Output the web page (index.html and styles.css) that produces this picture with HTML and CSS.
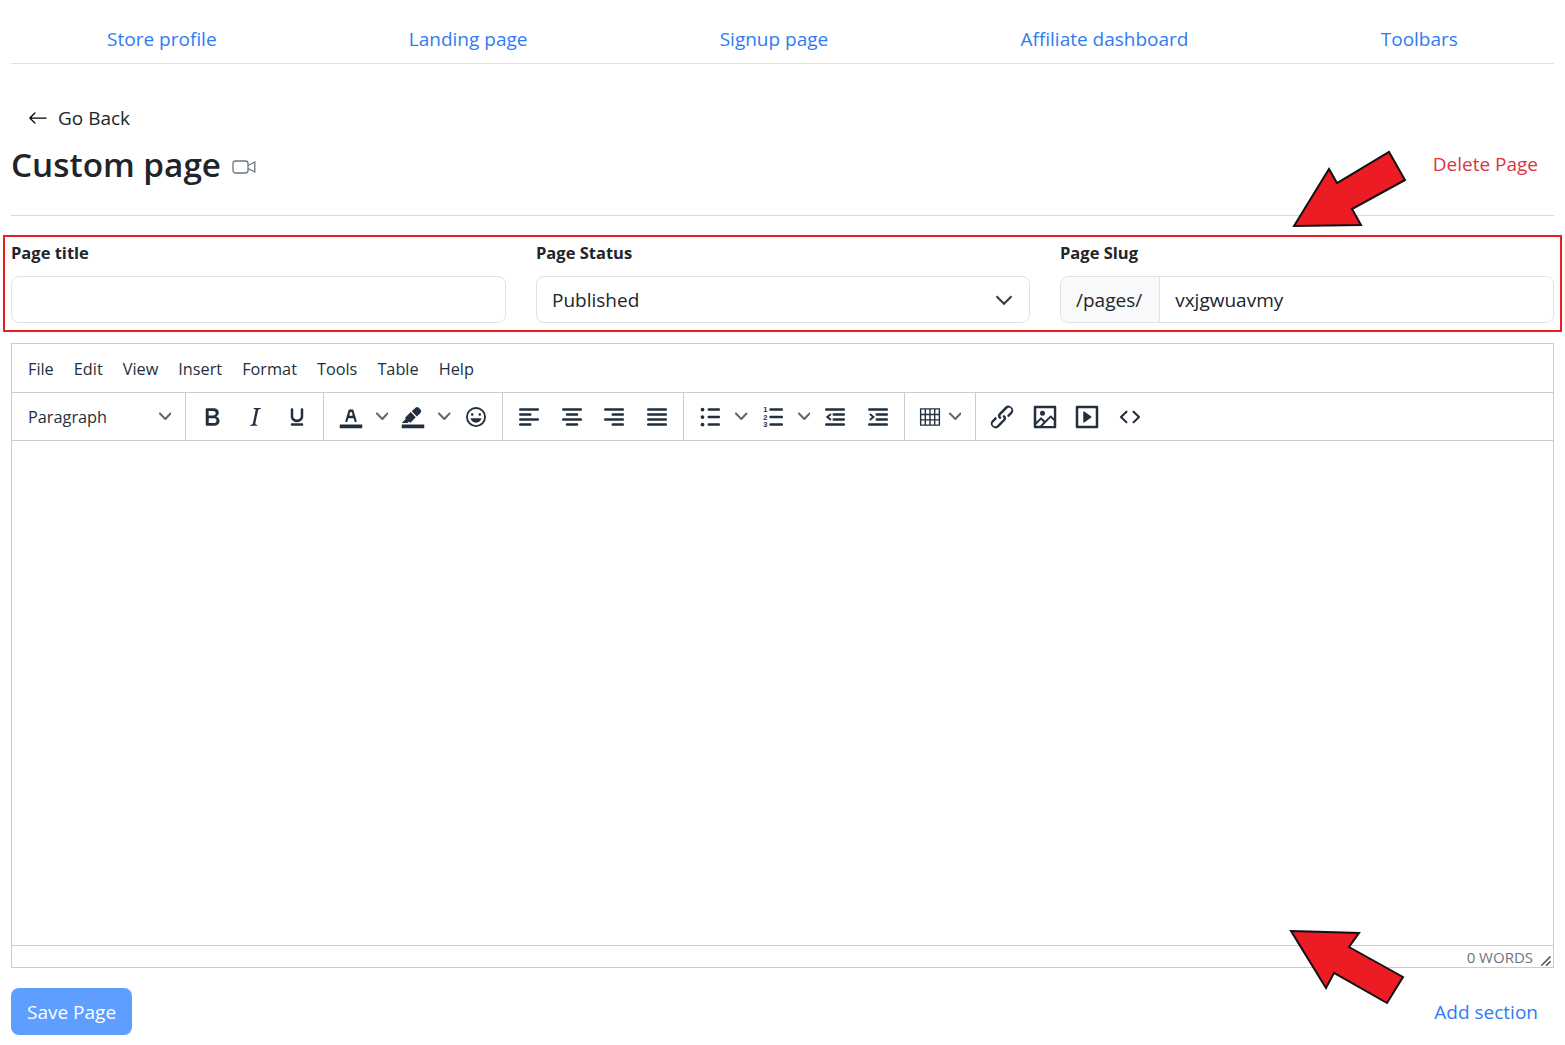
FILE: index.html
```html
<!DOCTYPE html>
<html lang="en">
<head>
    <meta charset="UTF-8">
    <meta name="viewport" content="width=device-width, initial-scale=1.0">
    <title>Custom page</title>
    <link rel="stylesheet" href="styles.css">
</head>
<body>
    <div class="page">
        <nav class="tabs">
            <a href="#">Store profile</a>
            <a href="#">Landing page</a>
            <a href="#">Signup page</a>
            <a href="#">Affiliate dashboard</a>
            <a href="#">Toolbars</a>
        </nav>

        <a class="go-back" href="#">
            <svg width="20" height="20" viewBox="0 0 16 16"><path d="M15 8a.5.5 0 0 0-.5-.5H2.707l3.147-3.146a.5.5 0 1 0-.708-.708l-4 4a.5.5 0 0 0 0 .708l4 4a.5.5 0 0 0 .708-.708L2.707 8.5H14.5A.5.5 0 0 0 15 8z"/></svg>
            <span>Go Back</span>
        </a>

        <div class="page-head">
            <h1>Custom page
                <svg class="video-icon" width="24" height="16" viewBox="0 0 24 16"><rect x="1" y="2" width="15" height="12" rx="2.5"/><path d="M16 6.5 22.8 3v10L16 9.5"/></svg>
            </h1>
            <a class="link-danger" href="#">Delete Page</a>
        </div>

        <hr class="divider">

        <form class="fields">
            <div class="field">
                <label for="title">Page title</label>
                <input id="title" type="text">
            </div>
            <div class="field">
                <label for="status">Page Status</label>
                <div class="select" id="status">
                    <span>Published</span>
                    <svg width="20" height="20" viewBox="0 0 16 16"><path d="m2 5 6 6 6-6"/></svg>
                </div>
            </div>
            <div class="field">
                <label for="slug">Page Slug</label>
                <div class="input-group">
                    <span class="addon">/pages/</span>
                    <input id="slug" type="text" value="vxjgwuavmy">
                </div>
            </div>
            <div class="annot-box"></div>
        </form>

        <div class="editor">
            <div class="menubar">
                <span>File</span><span>Edit</span><span>View</span><span>Insert</span><span>Format</span><span>Tools</span><span>Table</span><span>Help</span>
            </div>
            <div class="toolbar">
                <div class="group group-select">
                    <span>Paragraph</span>
                    <svg class="chev" viewBox="0 0 10 10"><path d="M8.7 2.2c.3-.3.8-.3 1 0 .4.4.4.9 0 1.2L5.7 7.8c-.3.3-.9.3-1.2 0L.2 3.4a.8.8 0 0 1 0-1.2c.3-.3.8-.3 1.1 0L5 6l3.7-3.8z"/></svg>
                </div>
                <div class="group group-format">
                    <span class="btn"><svg viewBox="0 0 24 24"><path d="M7.8 19c-.3 0-.5 0-.6-.2l-.2-.5V5.7c0-.2 0-.4.2-.5l.6-.2h5c1.5 0 2.7.3 3.5 1 .7.6 1.1 1.4 1.1 2.5a3 3 0 0 1-.6 1.9c-.4.6-1 1-1.6 1.2.4.1.9.3 1.3.6s.8.7 1 1.2c.4.4.5 1 .5 1.6 0 1.3-.4 2.3-1.3 3-.8.7-2.1 1-3.8 1H7.8zm5-8.3c.6 0 1.2-.1 1.6-.5.4-.3.6-.7.6-1.3 0-1.1-.8-1.7-2.3-1.7H9.3v3.5h3.4zm.5 6c.7 0 1.3-.1 1.7-.4.4-.4.6-.9.6-1.5s-.2-1-.7-1.4c-.4-.3-1-.4-2-.4H9.4v3.8h4z"/></svg></span>
                    <span class="btn"><svg viewBox="0 0 24 24"><path d="M16.7 4.7l-.1.9h-.3c-.6 0-1 0-1.4.3-.3.3-.4.6-.5 1.1l-2.1 9.8v.6c0 .5.4.8 1.4.8h.2l-.2.8H8l.2-.8h.2c1.1 0 1.8-.5 2-1.5l2-9.8.1-.5c0-.6-.4-.8-1.4-.8h-.3l.2-.9h5.8z"/></svg></span>
                    <span class="btn"><svg viewBox="0 0 24 24"><path d="M16 5c.6 0 1 .4 1 1v5.5a4 4 0 0 1-.4 1.8l-1 1.4a5.3 5.3 0 0 1-5.5 1 5 5 0 0 1-1.6-1c-.5-.4-.8-.9-1.1-1.4a4 4 0 0 1-.4-1.8V6c0-.6.4-1 1-1s1 .4 1 1v5.5c0 .3 0 .6.2 1l.6.7a3.3 3.3 0 0 0 2.2.8 3.4 3.4 0 0 0 2.2-.8c.3-.2.4-.5.6-.8l.2-.9V6c0-.6.4-1 1-1zM8 17h8c.6 0 1 .4 1 1s-.4 1-1 1H8a1 1 0 0 1 0-2z"/></svg></span>
                </div>
                <div class="group group-color">
                    <span class="btn"><svg viewBox="0 0 24 24"><path d="M3 18h18v3H3z"/><path d="M8.7 16h-.8a.5.5 0 0 1-.5-.6l2.7-9c.1-.3.3-.4.5-.4h2.8c.2 0 .4.1.5.4l2.7 9a.5.5 0 0 1-.5.6h-.8a.5.5 0 0 1-.4-.4l-.7-2.2c0-.3-.3-.4-.5-.4h-3.4c-.2 0-.4.1-.5.4l-.7 2.2c0 .3-.2.4-.4.4zm2.6-7.6l-.6 2a.5.5 0 0 0 .5.6h1.6a.5.5 0 0 0 .5-.6l-.6-2c0-.3-.3-.4-.5-.4h-.4c-.2 0-.4.1-.5.4z"/></svg></span>
                    <span class="caret"><svg class="chev" viewBox="0 0 10 10"><path d="M8.7 2.2c.3-.3.8-.3 1 0 .4.4.4.9 0 1.2L5.7 7.8c-.3.3-.9.3-1.2 0L.2 3.4a.8.8 0 0 1 0-1.2c.3-.3.8-.3 1.1 0L5 6l3.7-3.8z"/></svg></span>
                    <span class="btn"><svg viewBox="0 0 24 24"><path d="M3 18h18v3H3z"/><path d="M7.7 16.7H3l3.3-3.3-.7-.8L10.2 8l4 4.1-4 4.2c-.2.2-.6.2-.8 0l-.6-.7-1.1 1.1zm5-7.5L11 7.4l3-2.9a2 2 0 0 1 2.6 0L18 6c.7.7.7 2 0 2.7l-2.9 2.9-1.8-1.8-.5-.6"/></svg></span>
                    <span class="caret"><svg class="chev" viewBox="0 0 10 10"><path d="M8.7 2.2c.3-.3.8-.3 1 0 .4.4.4.9 0 1.2L5.7 7.8c-.3.3-.9.3-1.2 0L.2 3.4a.8.8 0 0 1 0-1.2c.3-.3.8-.3 1.1 0L5 6l3.7-3.8z"/></svg></span>
                    <span class="btn"><svg viewBox="0 0 24 24"><path d="M9 11c.6 0 1-.4 1-1s-.4-1-1-1-1 .4-1 1 .4 1 1 1zm6 0c.6 0 1-.4 1-1s-.4-1-1-1-1 .4-1 1 .4 1 1 1zm-3 5.5c2.1 0 4-1.5 4.4-3.5H7.6c.5 2 2.3 3.5 4.4 3.5zM12 4a8 8 0 1 0 0 16 8 8 0 0 0 0-16zm0 14.5a6.5 6.5 0 1 1 0-13 6.5 6.5 0 0 1 0 13z"/></svg></span>
                </div>
                <div class="group">
                    <span class="btn"><svg viewBox="0 0 24 24"><path d="M5 5h14c.6 0 1 .4 1 1s-.4 1-1 1H5a1 1 0 1 1 0-2zm0 4h8c.6 0 1 .4 1 1s-.4 1-1 1H5a1 1 0 1 1 0-2zm0 8h8c.6 0 1 .4 1 1s-.4 1-1 1H5a1 1 0 0 1 0-2zm0-4h14c.6 0 1 .4 1 1s-.4 1-1 1H5a1 1 0 0 1 0-2z"/></svg></span>
                    <span class="btn"><svg viewBox="0 0 24 24"><path d="M5 5h14c.6 0 1 .4 1 1s-.4 1-1 1H5a1 1 0 1 1 0-2zm3 4h8c.6 0 1 .4 1 1s-.4 1-1 1H8a1 1 0 1 1 0-2zm0 8h8c.6 0 1 .4 1 1s-.4 1-1 1H8a1 1 0 0 1 0-2zm-3-4h14c.6 0 1 .4 1 1s-.4 1-1 1H5a1 1 0 0 1 0-2z"/></svg></span>
                    <span class="btn"><svg viewBox="0 0 24 24"><path d="M5 5h14c.6 0 1 .4 1 1s-.4 1-1 1H5a1 1 0 1 1 0-2zm6 4h8c.6 0 1 .4 1 1s-.4 1-1 1h-8a1 1 0 0 1 0-2zm0 8h8c.6 0 1 .4 1 1s-.4 1-1 1h-8a1 1 0 0 1 0-2zm-6-4h14c.6 0 1 .4 1 1s-.4 1-1 1H5a1 1 0 0 1 0-2z"/></svg></span>
                    <span class="btn"><svg viewBox="0 0 24 24"><path d="M5 5h14c.6 0 1 .4 1 1s-.4 1-1 1H5a1 1 0 1 1 0-2zm0 4h14c.6 0 1 .4 1 1s-.4 1-1 1H5a1 1 0 1 1 0-2zm0 4h14c.6 0 1 .4 1 1s-.4 1-1 1H5a1 1 0 0 1 0-2zm0 4h14c.6 0 1 .4 1 1s-.4 1-1 1H5a1 1 0 0 1 0-2z"/></svg></span>
                </div>
                <div class="group">
                    <span class="btn"><svg viewBox="0 0 24 24"><circle cx="6" cy="6" r="1.5"/><circle cx="6" cy="12" r="1.5"/><circle cx="6" cy="18" r="1.5"/><path d="M11 5h8c.6 0 1 .4 1 1s-.4 1-1 1h-8a1 1 0 0 1 0-2zm0 6h8c.6 0 1 .4 1 1s-.4 1-1 1h-8a1 1 0 0 1 0-2zm0 6h8c.6 0 1 .4 1 1s-.4 1-1 1h-8a1 1 0 0 1 0-2z"/></svg></span>
                    <span class="caret"><svg class="chev" viewBox="0 0 10 10"><path d="M8.7 2.2c.3-.3.8-.3 1 0 .4.4.4.9 0 1.2L5.7 7.8c-.3.3-.9.3-1.2 0L.2 3.4a.8.8 0 0 1 0-1.2c.3-.3.8-.3 1.1 0L5 6l3.7-3.8z"/></svg></span>
                    <span class="btn"><svg viewBox="0 0 24 24"><text class="num" x="4.2" y="8">1</text><text class="num" x="4.2" y="14">2</text><text class="num" x="4.2" y="20">3</text><path d="M10 5h9c.6 0 1 .4 1 1s-.4 1-1 1h-9a1 1 0 1 1 0-2zm0 6h9c.6 0 1 .4 1 1s-.4 1-1 1h-9a1 1 0 0 1 0-2zm0 6h9c.6 0 1 .4 1 1s-.4 1-1 1h-9a1 1 0 0 1 0-2z"/></svg></span>
                    <span class="caret"><svg class="chev" viewBox="0 0 10 10"><path d="M8.7 2.2c.3-.3.8-.3 1 0 .4.4.4.9 0 1.2L5.7 7.8c-.3.3-.9.3-1.2 0L.2 3.4a.8.8 0 0 1 0-1.2c.3-.3.8-.3 1.1 0L5 6l3.7-3.8z"/></svg></span>
                    <span class="btn"><svg viewBox="0 0 24 24"><path d="M5 5h14c.6 0 1 .4 1 1s-.4 1-1 1H5a1 1 0 1 1 0-2zm6 4h8c.6 0 1 .4 1 1s-.4 1-1 1h-8a1 1 0 0 1 0-2zm0 4h8c.6 0 1 .4 1 1s-.4 1-1 1h-8a1 1 0 0 1 0-2zm-6 4h14c.6 0 1 .4 1 1s-.4 1-1 1H5a1 1 0 0 1 0-2z"/><path class="tip" d="M8.8 9.6 5.8 12l3 2.4"/></svg></span>
                    <span class="btn"><svg viewBox="0 0 24 24"><path d="M5 5h14c.6 0 1 .4 1 1s-.4 1-1 1H5a1 1 0 1 1 0-2zm6 4h8c.6 0 1 .4 1 1s-.4 1-1 1h-8a1 1 0 0 1 0-2zm0 4h8c.6 0 1 .4 1 1s-.4 1-1 1h-8a1 1 0 0 1 0-2zm-6 4h14c.6 0 1 .4 1 1s-.4 1-1 1H5a1 1 0 0 1 0-2z"/><path class="tip" d="M5.4 9.6 8.4 12l-3 2.4"/></svg></span>
                </div>
                <div class="group group-table">
                    <span class="btn btn-table"><svg viewBox="0 0 24 24"><path class="grid" d="M4.5 5.5h15v13h-15zM4.5 10h15M4.5 14.25h15M8.25 5.5v13M12 5.5v13M15.75 5.5v13"/></svg></span>
                    <span class="caret"><svg class="chev" viewBox="0 0 10 10"><path d="M8.7 2.2c.3-.3.8-.3 1 0 .4.4.4.9 0 1.2L5.7 7.8c-.3.3-.9.3-1.2 0L.2 3.4a.8.8 0 0 1 0-1.2c.3-.3.8-.3 1.1 0L5 6l3.7-3.8z"/></svg></span>
                </div>
                <div class="group group-last">
                    <span class="btn"><svg viewBox="0 0 24 24"><path d="M6.2 12.3a1 1 0 0 1 1.4 1.4l-2 2a2 2 0 1 0 2.6 2.8l4.8-4.8a1 1 0 0 0 0-1.4 1 1 0 1 1 1.4-1.3 2.9 2.9 0 0 1 0 4L9.6 20a3.9 3.9 0 0 1-5.5-5.5l2-2zm11.6-.6a1 1 0 0 1-1.4-1.4l2-2a2 2 0 1 0-2.6-2.8L11 10.3a1 1 0 0 0 0 1.4A1 1 0 1 1 9.6 13a2.9 2.9 0 0 1 0-4L14.4 4a3.9 3.9 0 0 1 5.5 5.5l-2 2z"/></svg></span>
                    <span class="btn"><svg viewBox="0 0 24 24"><path fill-rule="evenodd" d="M5 15.7l3.3-3.2c.3-.3.7-.3 1 0L12 15l4.1-4c.3-.4.8-.4 1 0l2 1.9V5H5v10.7zM5 18V19h3l2.8-2.9-2-2L5 17.9zm14-3l-2.5-2.4-6.4 6.5H19v-4zM4 3h16c.6 0 1 .4 1 1v16c0 .6-.4 1-1 1H4a1 1 0 0 1-1-1V4c0-.6.4-1 1-1zm6 8a2 2 0 1 0 0-4 2 2 0 0 0 0 4z"/></svg></span>
                    <span class="btn"><svg viewBox="0 0 24 24"><path fill-rule="evenodd" d="M4 3h16c.6 0 1 .4 1 1v16c0 .6-.4 1-1 1H4a1 1 0 0 1-1-1V4c0-.6.4-1 1-1zm1 2v14h14V5H5zm4.8 2.6l5.6 4a.5.5 0 0 1 0 .8l-5.6 4A.5.5 0 0 1 9 16V8a.5.5 0 0 1 .8-.4z"/></svg></span>
                    <span class="btn"><svg viewBox="0 0 24 24"><path d="M9.8 15.7c.3.3.3.8 0 1-.3.4-.9.4-1.2 0l-4.4-4.1a.8.8 0 0 1 0-1.2l4.4-4.2c.3-.3.9-.3 1.2 0 .3.3.3.8 0 1.1L6 12l3.8 3.7zm4.4 0l3.8-3.7-3.8-3.7a.8.8 0 0 1 0-1.1c.3-.3.9-.3 1.2 0l4.4 4.2c.3.3.3.9 0 1.2l-4.4 4.1c-.3.4-.9.4-1.2 0a.8.8 0 0 1 0-1z"/></svg></span>
                </div>
            </div>
            <div class="content"></div>
            <div class="statusbar">
                <span>0 WORDS</span>
                <svg width="12" height="12" viewBox="0 0 10 10"><path d="M8.1 1.1A.5.5 0 1 1 8.9 2l-7 7A.5.5 0 1 1 1 8.1l7-7zM8.1 5.1A.5.5 0 1 1 8.9 6l-3 3A.5.5 0 1 1 5 8.1l3-3z"/></svg>
            </div>
        </div>

        <div class="page-foot">
            <button class="save" type="button">Save Page</button>
            <a href="#">Add section</a>
        </div>

        <!-- arrows drawn on top of the screenshot -->
        <svg class="annot-arrows" width="1565" height="1045" viewBox="0 0 1565 1045">
            <polygon points="1294,226 1329,169 1337,183 1389,152 1405,180 1352,209 1361,225"/>
            <polygon points="1291,931 1359,933 1349,947 1403,977 1387,1003 1334,973 1326,988"/>
        </svg>
    </div>
</body>
</html>
```

FILE: styles.css
```css
* {
    box-sizing: border-box;
}
html, body {
    margin: 0;
    height: 100%;
}
body {
    font-family: "Open Sans", "Noto Sans", sans-serif;
    font-size: 19px;
    line-height: 30px;
    color: #212529;
    background-color: white;
    overflow: hidden;
}
a {
    color: #2f7bf6;
    text-decoration: none;
}
.page {
    position: relative;
    padding: 0 11px;
    height: 1045px;
}
.tabs {
    display: flex;
    height: 64px;
    padding-top: 24px;
    border-bottom: 1px solid #dee2e6;
}
.tabs a {
    flex: 1 1 auto;
    text-align: center;
}
.go-back {
    display: flex;
    align-items: center;
    gap: 10px;
    margin: 39px 0 0 17px;
    color: #212529;
}
.page-head {
    display: flex;
    justify-content: space-between;
    align-items: center;
    margin-top: 10px;
    height: 42px;
}
h1 {
    display: flex;
    align-items: center;
    gap: 11px;
    margin: 0;
    font-size: 33.3px;
    font-weight: 600;
    line-height: 42px;
}
.video-icon {
    fill: none;
    stroke: #6c757d;
    stroke-width: 1.3;
    margin-top: 6px;
}
.link-danger {
    color: #dc3545;
    padding-right: 16px;
}
.divider {
    border: none;
    border-top: 1px solid #d9d9d9;
    margin: 30px 0 0;
}
.fields {
    position: relative;
    display: grid;
    grid-template-columns: 495px 494px 1fr;
    gap: 30px;
    margin-top: 24px;
}
.field label {
    display: block;
    font-size: 16.5px;
    font-weight: 700;
    line-height: 26px;
    margin-bottom: 10px;
}
input, .select, .input-group {
    width: 100%;
    height: 47px;
    border: 1px solid #dee2e6;
    border-radius: 8px;
    font-family: inherit;
    font-size: 19px;
    color: #212529;
    background-color: white;
}
input {
    display: block;
    padding: 1px 15px 0;
}
.select {
    display: flex;
    justify-content: space-between;
    align-items: center;
    padding: 1px 15px 0;
}
.select svg {
    fill: none;
    stroke: #343a40;
    stroke-width: 1.6;
}
.input-group {
    display: flex;
    overflow: hidden;
}
.input-group input {
    flex: 1;
    height: 45px;
    padding-left: 15px;
    border: none;
    border-radius: 0;
}
.addon {
    display: flex;
    align-items: center;
    padding: 1px 17px 0 15px;
    background-color: #f8f9fa;
    border-right: 1px solid #dee2e6;
}
.annot-box {
    position: absolute;
    left: -8px;
    top: -5px;
    width: 1559px;
    height: 97px;
    border: 2px solid #ed1c24;
    pointer-events: none;
}
.editor {
    display: flex;
    flex-direction: column;
    height: 625px;
    margin-top: 20px;
    border: 1px solid #ccc;
    color: #222f3e;
}
.menubar {
    display: flex;
    align-items: center;
    gap: 20px;
    height: 49px;
    padding: 1px 16px 0;
    font-size: 16.3px;
    border-bottom: 1px solid #ccc;
}
.toolbar {
    display: flex;
    height: 48px;
    border-bottom: 1px solid #ccc;
}
.group {
    display: flex;
    align-items: center;
    padding: 0 5px;
    border-right: 1px solid #ccc;
}
.group-select {
    justify-content: space-between;
    width: 174px;
    padding: 0 14px 0 16px;
    font-size: 16.3px;
}
.group-format {
    padding-right: 4px;
}
.group-color {
    padding-left: 6px;
}
.group-table {
    padding: 0 10px;
}
.group-last {
    border-right: none;
}
.btn {
    display: flex;
    justify-content: center;
    align-items: center;
    width: 42.5px;
    height: 100%;
}
.btn svg {
    width: 30px;
    height: 30px;
    fill: #222f3e;
}
.btn-table {
    width: 30px;
}
.btn .grid {
    fill: none;
    stroke: #222f3e;
    stroke-width: 1.1;
}
.btn .tip {
    fill: none;
    stroke: #222f3e;
    stroke-width: 1.5;
}
.btn .num {
    font-family: "Liberation Sans", sans-serif;
    font-size: 6px;
    font-weight: 700;
}
.caret {
    display: flex;
    justify-content: center;
    align-items: center;
    width: 20px;
    height: 100%;
}
.chev {
    width: 12.5px;
    height: 12.5px;
    fill: #5d6774;
}
.content {
    flex: 1;
}
.statusbar {
    display: flex;
    justify-content: flex-end;
    align-items: center;
    gap: 7px;
    height: 22px;
    padding-right: 1px;
    font-size: 15px;
    color: #6d7580;
    border-top: 1px solid #ccc;
}
.statusbar svg {
    fill: #4b5563;
    align-self: flex-end;
}
.page-foot {
    display: flex;
    justify-content: space-between;
    align-items: center;
    margin-top: 20px;
}
.page-foot a {
    padding-right: 16px;
}
.save {
    height: 47px;
    padding: 0 16px;
    border: none;
    border-radius: 8px;
    font-family: inherit;
    font-size: 19px;
    color: white;
    background-color: #5e9eff;
}
.annot-arrows {
    position: absolute;
    left: 0;
    top: 0;
    pointer-events: none;
}
.annot-arrows polygon {
    fill: #ed1c24;
    stroke: #111;
    stroke-width: 2;
}
```
